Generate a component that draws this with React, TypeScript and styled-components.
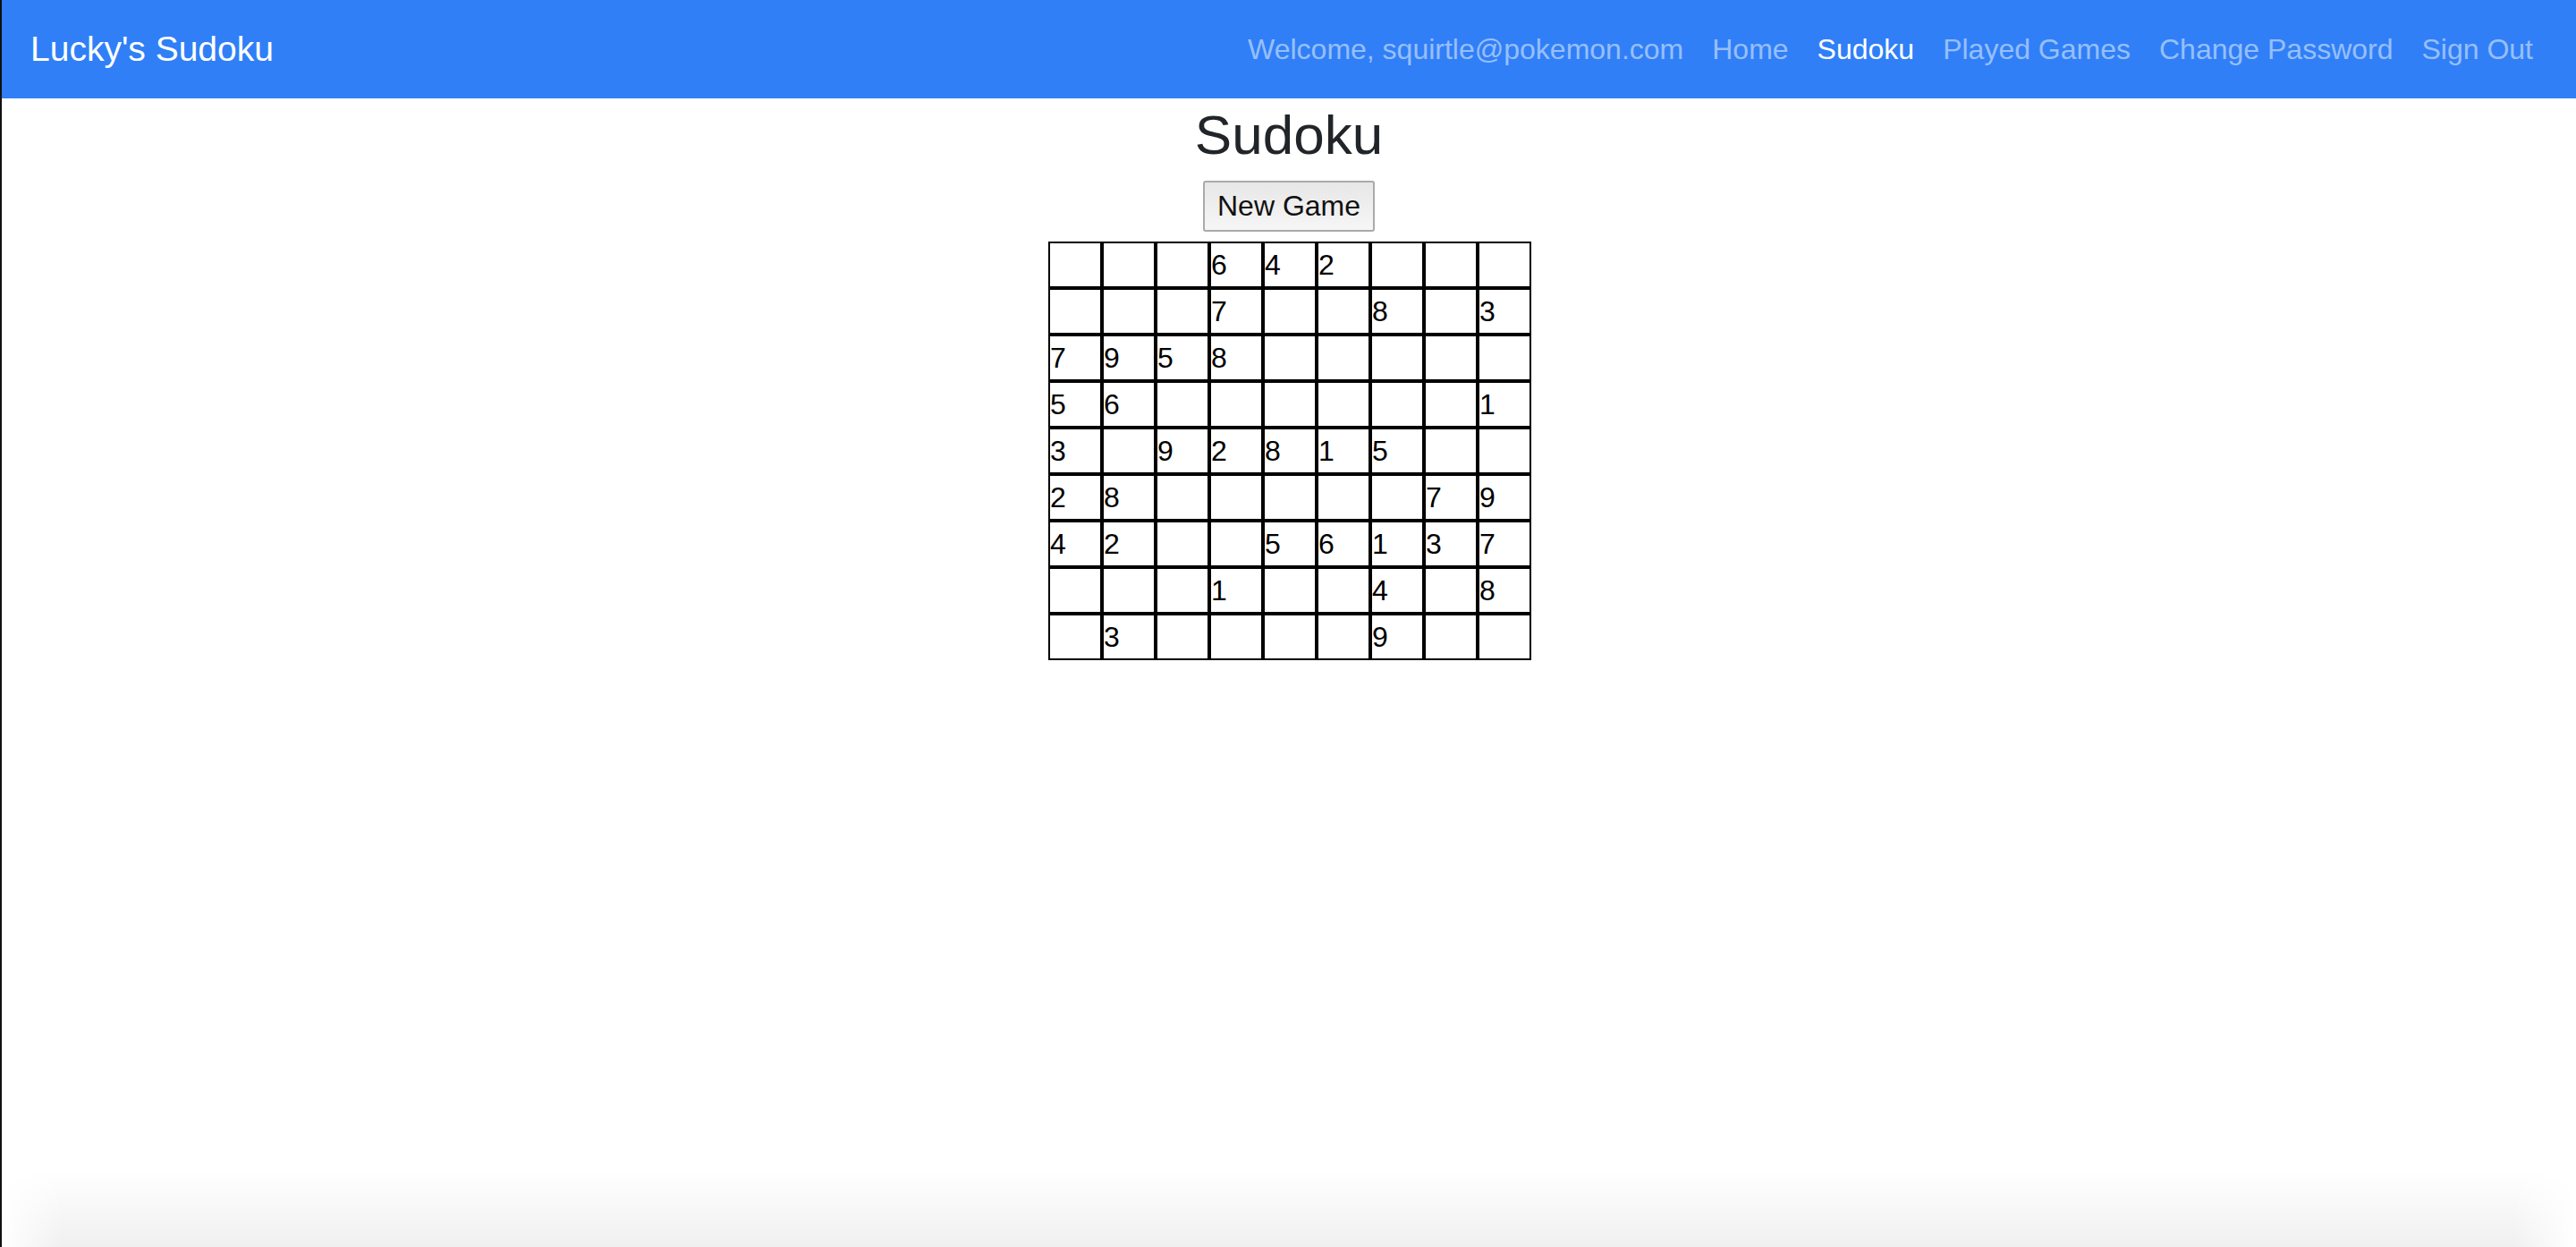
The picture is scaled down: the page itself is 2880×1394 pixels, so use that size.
import React from 'react';
import styled, { createGlobalStyle } from 'styled-components';

const GlobalStyle = createGlobalStyle`
  html, body {
    margin: 0;
    padding: 0;
    background: #fff;
    font-family: "Liberation Sans", Helvetica, Arial, sans-serif;
  }
  * {
    box-sizing: border-box;
  }
`;

const Page = styled.div`
  min-height: 100vh;
  border-left: 2px solid #111;
  background: #fff;
`;

const Navbar = styled.nav`
  height: 110px;
  display: flex;
  align-items: center;
  justify-content: space-between;
  padding: 0 32px;
  background: #307ff7;
`;

const Brand = styled.a`
  font-size: 39px;
  line-height: 60px;
  color: #fff;
  text-decoration: none;
`;

const NavList = styled.div`
  display: flex;
  align-items: center;
`;

const NavItem = styled.a<{ $active?: boolean }>`
  padding: 0 16px;
  font-size: 32px;
  line-height: 48px;
  color: ${(p) => (p.$active ? '#fff' : 'rgba(255, 255, 255, 0.5)')};
  text-decoration: none;
`;

const Main = styled.main`
  display: flex;
  flex-direction: column;
  align-items: center;
`;

const Title = styled.h2`
  margin: 4px 0 14px;
  font-size: 62px;
  font-weight: 400;
  line-height: 1.2;
  color: #212529;
`;

const Button = styled.button`
  font-family: "Liberation Sans", Helvetica, Arial, sans-serif;
  font-size: 32px;
  line-height: 37px;
  padding: 8px 14px;
  margin-bottom: 11px;
  color: #111;
  border: 2px solid #aaa;
  border-radius: 3px;
  background: linear-gradient(#e7e7e7, #f6f6f6);
  cursor: pointer;
`;

const Board = styled.div`
  display: grid;
  grid-template-columns: repeat(9, 60px);
  grid-auto-rows: 52px;
  margin-left: 2px;
`;

const Cell = styled.div`
  border: 2px solid #000;
  display: flex;
  align-items: center;
  font-size: 32px;
  color: #000;
`;

const BottomFade = styled.div`
  position: fixed;
  left: 0;
  right: 0;
  bottom: 0;
  height: 86px;
  pointer-events: none;
  background: linear-gradient(to bottom, rgba(0, 0, 0, 0), rgba(0, 0, 0, 0.06));
  -webkit-mask-image: linear-gradient(to right, transparent 0, #000 70px, #000 calc(100% - 70px), transparent 100%);
  mask-image: linear-gradient(to right, transparent 0, #000 70px, #000 calc(100% - 70px), transparent 100%);
`;

const puzzle = [
  '   642   ',
  '   7  8 3',
  '7958     ',
  '56      1',
  '3 92815  ',
  '28     79',
  '42  56137',
  '   1  4 8',
  ' 3    9  ',
];

const links = [
  { label: 'Welcome, squirtle@pokemon.com' },
  { label: 'Home' },
  { label: 'Sudoku', active: true },
  { label: 'Played Games' },
  { label: 'Change Password' },
  { label: 'Sign Out' },
];

const App: React.FC = () => {
  return (
    <Page>
      <GlobalStyle />
      <Navbar>
        <Brand href="#">Lucky's Sudoku</Brand>
        <NavList>
          {links.map((l) => (
            <NavItem key={l.label} href="#" $active={l.active}>
              {l.label}
            </NavItem>
          ))}
        </NavList>
      </Navbar>

      <Main>
        <Title>Sudoku</Title>
        <Button type="button">New Game</Button>
        <Board>
          {puzzle.map((row, r) =>
            row.split('').map((ch, c) => (
              <Cell key={`${r}-${c}`}>{ch.trim()}</Cell>
            ))
          )}
        </Board>
      </Main>
      <BottomFade />
    </Page>
  );
};

export default App;
